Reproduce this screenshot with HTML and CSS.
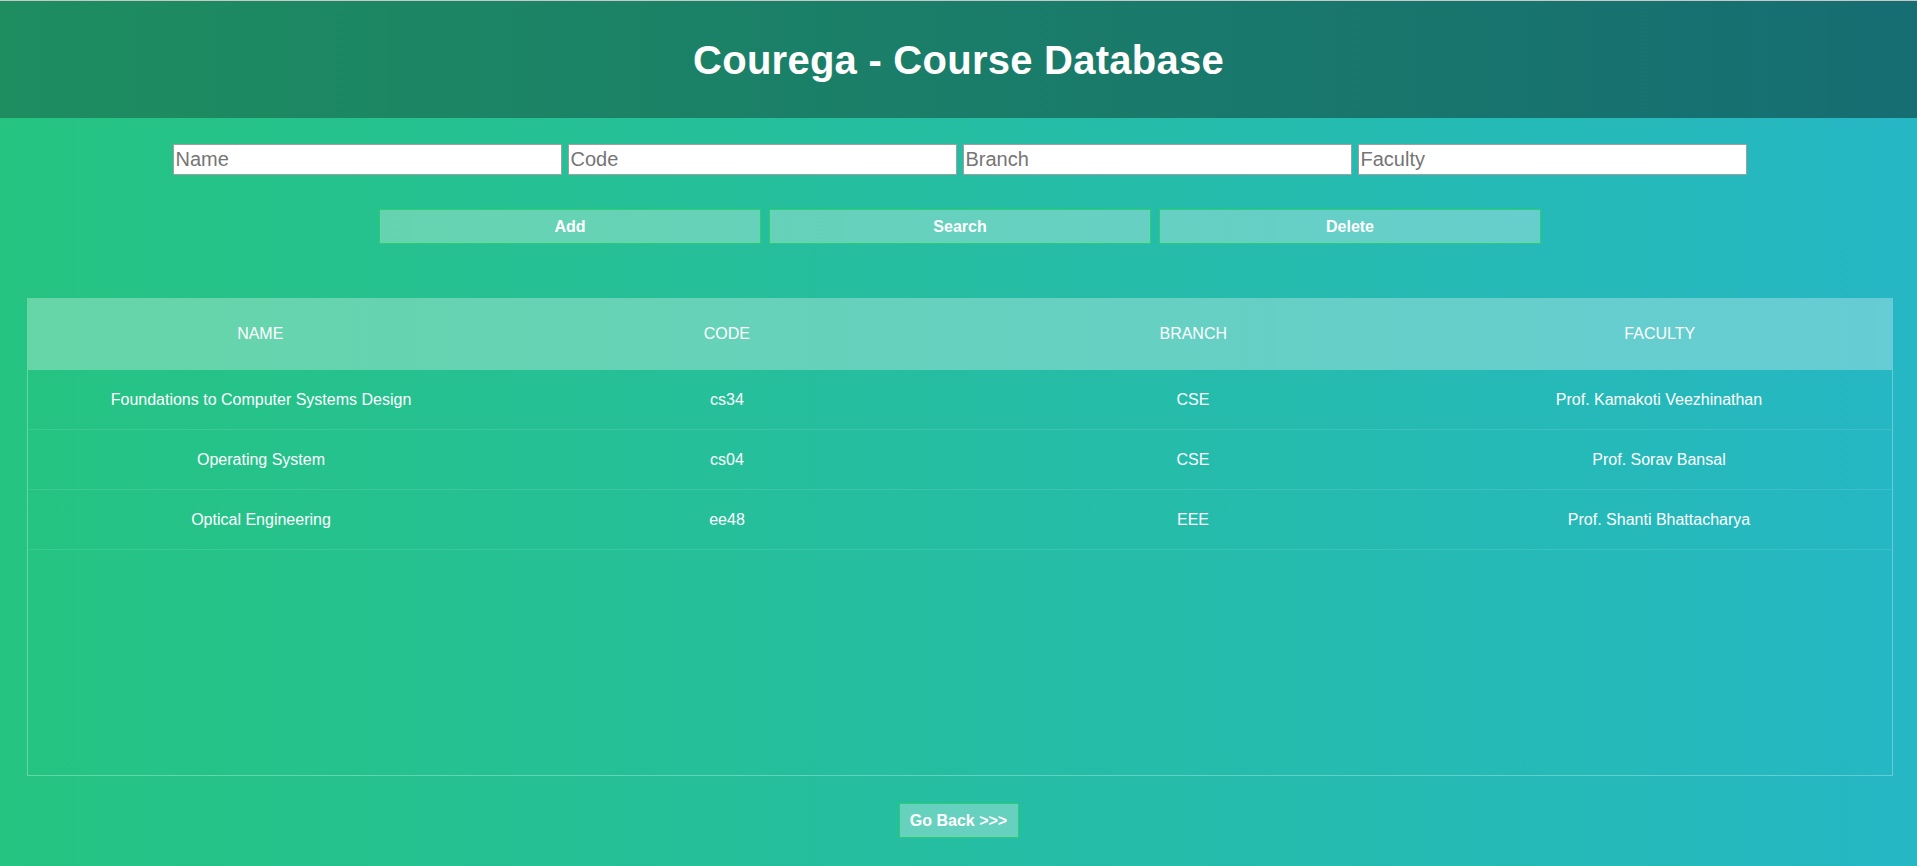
FILE: index.html
```html
<!DOCTYPE html>
<html>
<head>
<meta charset="utf-8">
<title>Courega - Course Database</title>
<link rel="stylesheet" href="styles.css">
</head>
<body>
<header class="topbar">
  <h1 class="title">Courega - Course Database</h1>
</header>
<div class="form-row">
  <input class="field" type="text" placeholder="Name">
  <input class="field" type="text" placeholder="Code">
  <input class="field" type="text" placeholder="Branch">
  <input class="field" type="text" placeholder="Faculty">
</div>
<div class="btn-row">
  <button class="btn wide">Add</button>
  <button class="btn wide">Search</button>
  <button class="btn wide">Delete</button>
</div>
<section class="tbl">
  <div class="tbl-header">
    <table>
      <thead>
        <tr><th>Name</th><th>Code</th><th>Branch</th><th>Faculty</th></tr>
      </thead>
    </table>
  </div>
  <div class="tbl-content">
    <table>
      <tbody>
        <tr><td>Foundations to Computer Systems Design</td><td>cs34</td><td>CSE</td><td>Prof. Kamakoti Veezhinathan</td></tr>
        <tr><td>Operating System</td><td>cs04</td><td>CSE</td><td>Prof. Sorav Bansal</td></tr>
        <tr><td>Optical Engineering</td><td>ee48</td><td>EEE</td><td>Prof. Shanti Bhattacharya</td></tr>
      </tbody>
    </table>
  </div>
</section>
<div class="back-row">
  <button class="btn back">Go Back &gt;&gt;&gt;</button>
</div>
</body>
</html>
```
FILE: styles.css
```css
html, body {
  margin: 0;
  padding: 0;
}
body {
  min-height: 100vh;
  background: linear-gradient(to right, #25c481, #25b7c4);
  font-family: "Liberation Sans", Arial, sans-serif;
  color: #fff;
}
.topbar {
  height: 117px;
  border-top: 1px solid #c8c8c8;
  background: linear-gradient(to right, #1e8d60, #166d72);
  display: flex;
  align-items: center;
  justify-content: center;
}
.title {
  margin: 0;
  font-size: 40px;
  font-weight: bold;
  letter-spacing: 0.25px;
  color: #fff;
  line-height: 46px;
}
.form-row {
  display: flex;
  justify-content: center;
  gap: 6px;
  margin-top: 26px;
  padding-left: 2px;
}
.field {
  box-sizing: border-box;
  width: 389px;
  height: 31px;
  margin: 0;
  padding: 0 2px;
  border: 1px solid #a0a0a0;
  background: #fff;
  font-family: "Liberation Sans", Arial, sans-serif;
  font-size: 20px;
  color: #333;
}
.field::placeholder {
  color: #757575;
}
.btn-row {
  display: flex;
  justify-content: center;
  gap: 8px;
  margin-top: 34px;
  padding-left: 3px;
}
.btn {
  box-sizing: border-box;
  height: 35px;
  margin: 0;
  border: 1px solid #2ecc71;
  background: rgba(255, 255, 255, 0.3);
  color: #fff;
  font-family: "Liberation Sans", Arial, sans-serif;
  font-weight: bold;
  font-size: 16px;
  padding: 0;
}
.wide {
  width: 382px;
}
.tbl {
  margin: 54px 24px 0 27px;
}
.tbl table {
  width: 100%;
  table-layout: fixed;
  border-collapse: collapse;
}
.tbl-header {
  background: rgba(255, 255, 255, 0.3);
}
.tbl-content {
  box-sizing: border-box;
  height: 406px;
  overflow-x: auto;
  border: 1px solid rgba(255, 255, 255, 0.3);
  border-top: none;
}
th {
  padding: 26px 15px;
  line-height: 20px;
  font-size: 16px;
  font-weight: normal;
  text-transform: uppercase;
  text-align: center;
  color: #fff;
}
td {
  padding: 20px 15px;
  line-height: 19px;
  font-size: 16px;
  text-align: center;
  color: #fff;
  border-bottom: 1px solid rgba(255, 255, 255, 0.1);
}
.back-row {
  display: flex;
  justify-content: center;
  margin-top: 27px;
}
.back {
  width: 120px;
}
```
